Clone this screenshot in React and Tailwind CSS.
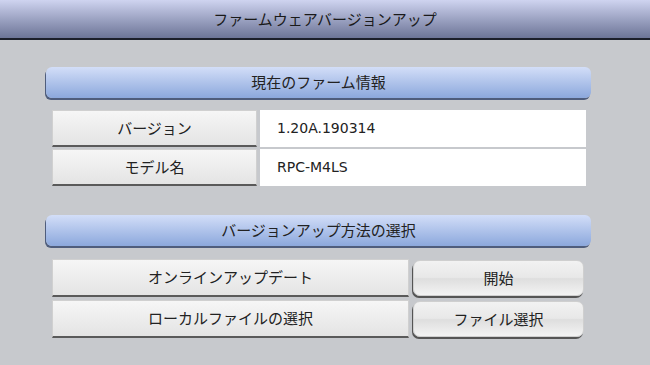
const SectionHeader = ({ children }) => (
  <div className="ml-[46px] w-[545px] h-[31px] rounded-[6px] bg-gradient-to-b from-[#d3def8] to-[#8ca8dc] shadow-[-1px_2px_0_#4f5d7c] flex items-center justify-center text-[15px] text-[#222]">
    {children}
  </div>
);

const LabelCell = ({ children, className = '' }) => (
  <div
    className={`h-full flex items-center justify-center bg-gradient-to-b from-[#f6f6f6] to-[#e4e4e4] border border-[#d0d0d0] border-b-[2px] border-b-[#5a5a5a] text-[15px] text-[#222] ${className}`}
  >
    {children}
  </div>
);

const GlossButton = ({ children }) => (
  <button className="w-[171px] h-[36px] rounded-[7px] bg-[linear-gradient(to_bottom,#f2f2f2_0%,#e8e8e8_48%,#dedede_52%,#f3f3f3_100%)] border border-[#cfcfcf] shadow-[-1px_2px_0_#555] text-[15px] text-[#222]">
    {children}
  </button>
);

export default function App() {
  return (
    <div
      className="w-[650px] h-[365px] bg-[#c7c9cd] overflow-hidden"
      style={{ fontFamily: '"Noto Sans CJK JP", "Noto Sans", sans-serif' }}
    >
      <header className="h-[40px] bg-gradient-to-b from-[#cfd4f0] to-[#6d7597] border-b-[2px] border-b-[#1c1f2a] flex items-center justify-center text-[15px] text-[#1a1a1a]">
        ファームウェアバージョンアップ
      </header>

      <div className="pt-[27px]">
        <SectionHeader>現在のファーム情報</SectionHeader>

        <div className="mt-[12px] ml-[52px] w-[534px] flex flex-col gap-[2px]">
          {[
            ['バージョン', '1.20A.190314'],
            ['モデル名', 'RPC-M4LS'],
          ].map(([label, value]) => (
            <div key={label} className="flex h-[37px] gap-[3px]">
              <LabelCell className="w-[205px]">{label}</LabelCell>
              <div className="flex-1 bg-white flex items-center pl-[17px] text-[14px] text-[#222] font-['DejaVu_Sans',sans-serif]">
                {value}
              </div>
            </div>
          ))}
        </div>

        <div className="mt-[29px]">
          <SectionHeader>バージョンアップ方法の選択</SectionHeader>
        </div>

        <div className="mt-[13px] ml-[52px] flex flex-col gap-[3px]">
          {[
            ['オンラインアップデート', '開始'],
            ['ローカルファイルの選択', 'ファイル選択'],
          ].map(([label, btn]) => (
            <div key={label} className="flex items-start gap-[4px] h-[38px]">
              <LabelCell className="w-[357px]">{label}</LabelCell>
              <div className="pt-[1px]">
                <GlossButton>{btn}</GlossButton>
              </div>
            </div>
          ))}
        </div>
      </div>
    </div>
  );
}
